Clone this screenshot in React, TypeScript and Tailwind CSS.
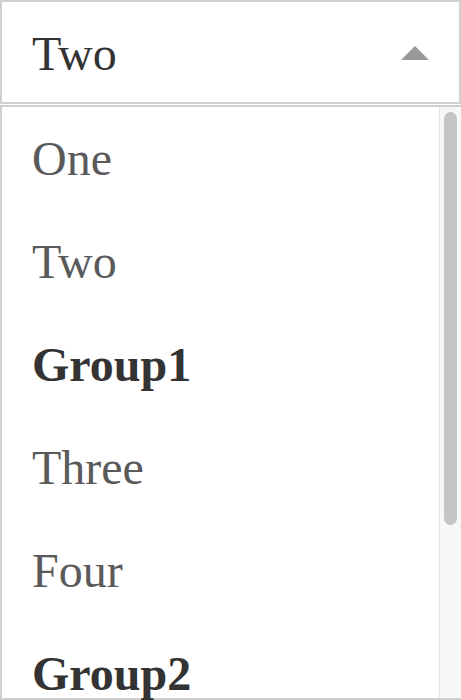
const options: { label: string; group?: boolean }[] = [
  { label: "One" },
  { label: "Two" },
  { label: "Group1", group: true },
  { label: "Three" },
  { label: "Four" },
  { label: "Group2", group: true },
];

export default function App() {
  return (
    <div className="flex h-[700px] w-[461px] flex-col overflow-hidden bg-white font-['Liberation_Serif',serif]">
      <div className="flex h-[104px] shrink-0 items-center justify-between border-2 border-[#cfcfcf] pl-[30px] pr-[29px] pt-[4px]">
        <span className="text-[48px] leading-none text-[#333]">Two</span>
        <svg width="30" height="16" viewBox="0 0 30 16" className="mb-[2px]">
          <polygon points="15,1 29,15 1,15" fill="#999" />
        </svg>
      </div>
      <div className="mt-[1px] flex min-h-0 flex-1 border-l-2 border-t-2 border-b-2 border-[#cfcfcf]">
        <ul className="flex min-w-0 flex-1 flex-col">
          {options.map((o) => (
            <li
              key={o.label}
              className={
                o.group
                  ? "flex h-[103px] shrink-0 items-center pl-[30px] text-[48px] font-bold text-[#333]"
                  : "flex h-[103px] shrink-0 items-center pl-[30px] text-[48px] text-[#5a5a5a]"
              }
            >
              {o.label}
            </li>
          ))}
        </ul>
        <div className="flex w-[22px] shrink-0 justify-center border-l border-[#e6e6e6] bg-[#f7f7f7] pt-[5px]">
          <div className="h-[413px] w-[13px] rounded-full bg-[#c4c4c4]" />
        </div>
      </div>
    </div>
  );
}
